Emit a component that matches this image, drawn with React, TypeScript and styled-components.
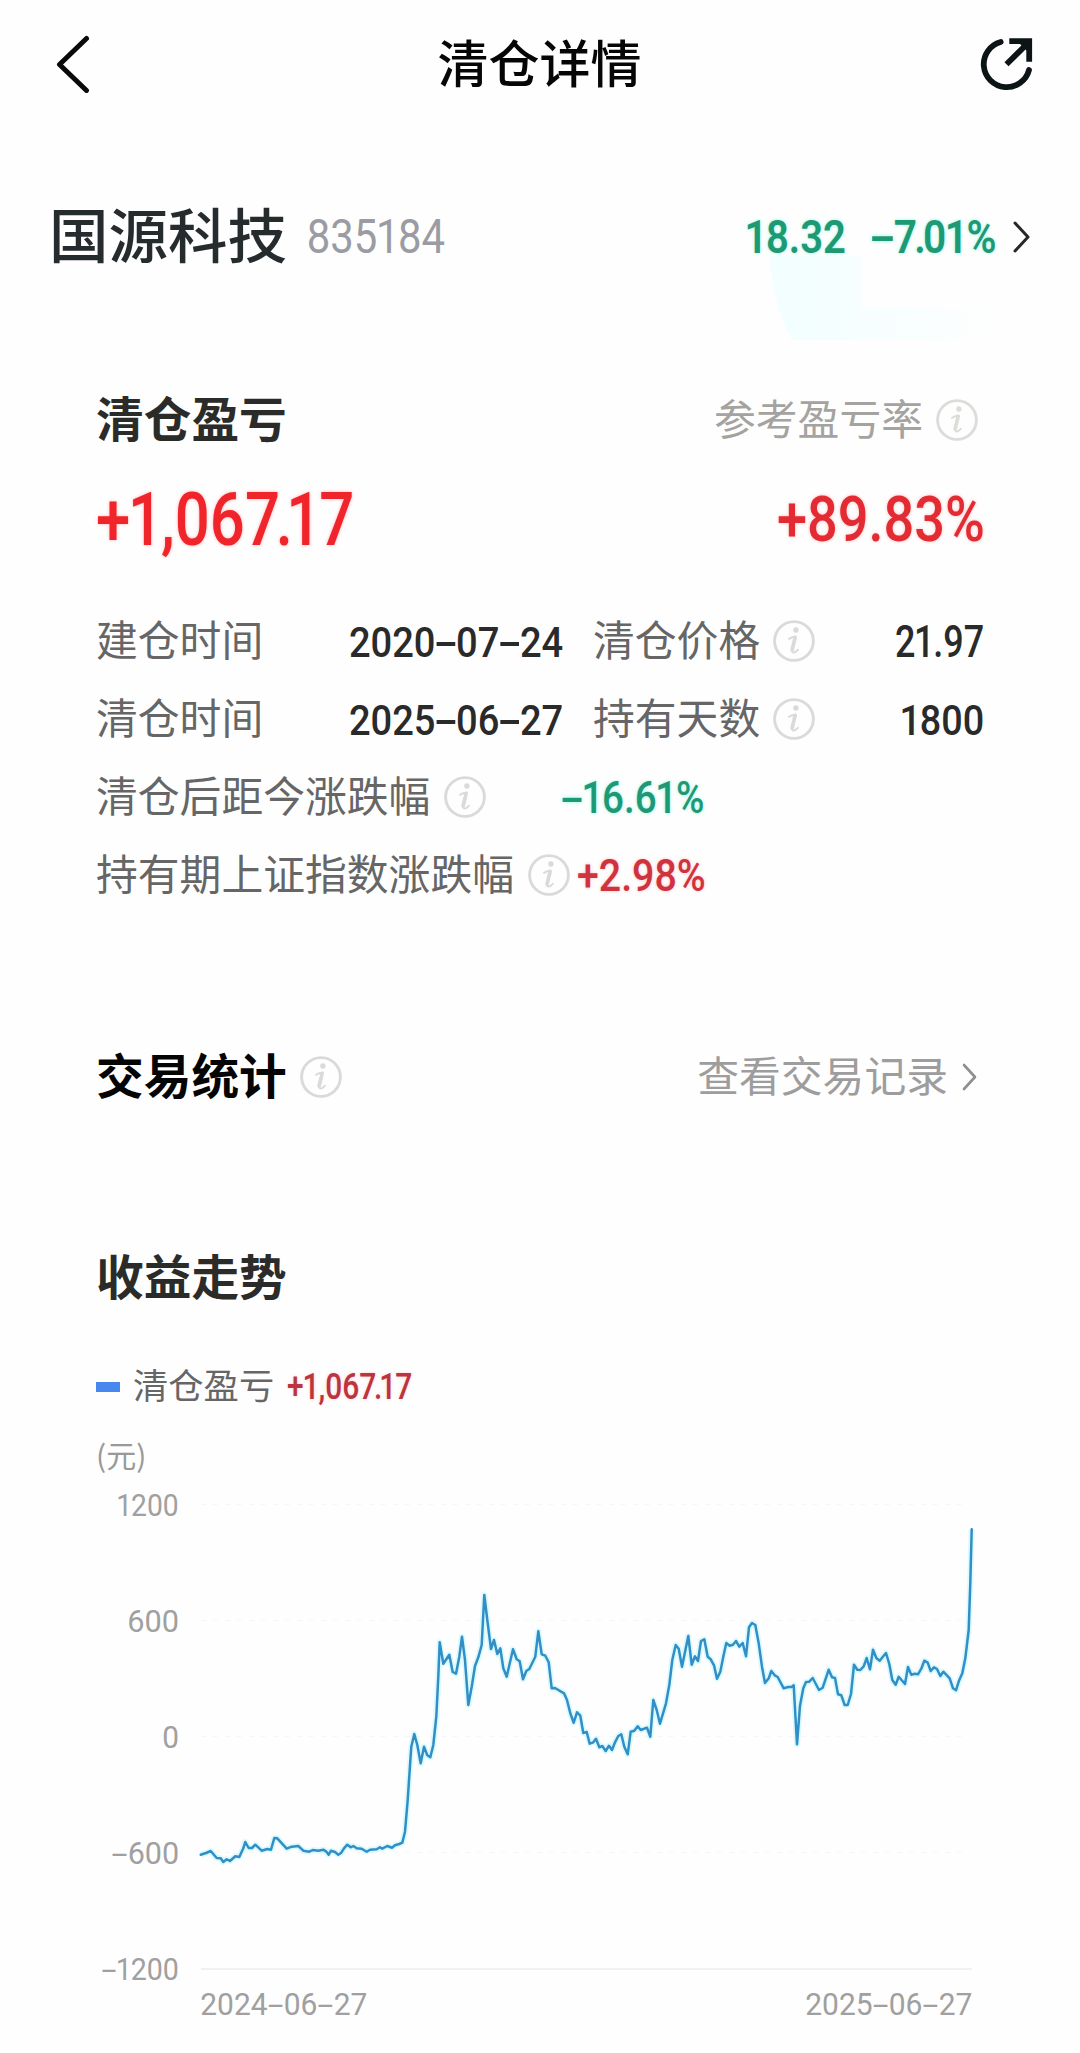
import React, { useLayoutEffect, useRef, useState } from 'react';
import styled, { createGlobalStyle } from 'styled-components';

const GlobalStyle = createGlobalStyle`
  * { box-sizing: border-box; }
  body { margin: 0; background: #fefefe; }
`;

const cjk = '"Noto Sans CJK SC", "Noto Sans", sans-serif';
const latin = 'Roboto, "Noto Sans CJK SC", sans-serif';

const Page = styled.main`
  width: 1080px;
  height: 2053px;
  overflow: hidden;
  background: #fefefe;
  font-family: ${cjk};
  color: #2b2b2b;
`;

const Header = styled.header`
  display: grid;
  grid-template-columns: 1fr auto 1fr;
  align-items: center;
  height: 128px;
  padding: 0 42px 0 54px;
`;

const IconButton = styled.button<{ $align: string }>`
  display: flex;
  justify-content: ${(p) => p.$align};
  padding: 0;
  border: 0;
  background: none;
`;

const Title = styled.h1`
  margin: 0 13px 6px 0;
  font-size: 51px;
  line-height: 60px;
  font-weight: 500;
  color: #060606;
`;

const Quote = styled.section`
  position: relative;
  display: flex;
  align-items: center;
  height: 80px;
  margin-top: 68px;
  padding: 0 50px 0 49px;
`;

const Wash = styled.svg`
  position: absolute;
  left: 768px;
  top: 56px;
`;

const StockName = styled.h2`
  margin: 0 21px 9px 0;
  font-size: 59.5px;
  line-height: 70px;
  font-weight: 500;
  color: #262b2e;
`;

const Price = styled.div`
  display: flex;
  align-items: center;
  gap: 28px;
  margin-left: auto;
  position: relative;
`;

const ChevronSlot = styled.span`
  display: flex;
  margin: 2px 0 0 -10px;
`;

const Section = styled.section<{ $top: number }>`
  margin-top: ${(p) => p.$top}px;
  padding: 0 97px 0 96px;
`;

const Line = styled.div<{ $height: number; $top?: number }>`
  display: flex;
  align-items: center;
  justify-content: space-between;
  height: ${(p) => p.$height}px;
  margin-top: ${(p) => p.$top ?? 0}px;
`;

const Group = styled.div<{ $gap: number; $end?: number }>`
  display: flex;
  align-items: center;
  gap: ${(p) => p.$gap}px;
  padding-right: ${(p) => p.$end ?? 0}px;
`;

const Heading = styled.h3<{ $color?: string }>`
  margin: 0 0 7px;
  font-size: 47.7px;
  line-height: 56px;
  font-weight: 700;
  color: ${(p) => p.$color ?? '#2b2c29'};
`;

const Label = styled.span<{ $color?: string; $size?: number }>`
  margin-bottom: 5px;
  font-size: ${(p) => p.$size ?? 41.8}px;
  line-height: 1.2;
  font-weight: 400;
  white-space: nowrap;
  color: ${(p) => p.$color ?? '#666'};
`;

const DetailRow = styled.div<{ $columns: string }>`
  display: grid;
  grid-template-columns: ${(p) => p.$columns};
  align-items: center;
  height: 78px;
`;

const LegendMark = styled.span`
  width: 24px;
  height: 10px;
  background: #4787ee;
`;

const Chart = styled.div`
  display: grid;
  grid-template-columns: 82px 770px;
  column-gap: 23px;
  margin-top: 9px;
`;

const Axis = styled.div`
  display: flex;
  flex-direction: column;
  align-items: flex-end;
  justify-content: space-between;
  height: 504px;
`;

const Dates = styled.div`
  grid-column: 2;
  display: flex;
  justify-content: space-between;
  align-items: center;
  height: 30px;
`;

const NumberBox = styled.span<{ $width: number }>`
  display: block;
  flex: none;
  width: ${(p) => p.$width}px;
`;

const NumberText = styled.span<{ $size: number; $color: string; $weight: number; $glow?: string }>`
  display: inline-block;
  font-family: ${latin};
  font-size: ${(p) => p.$size}px;
  line-height: 40px;
  font-weight: ${(p) => p.$weight};
  white-space: nowrap;
  transform-origin: 0 50%;
  color: ${(p) => p.$color};
  text-shadow: ${(p) => (p.$glow ? `0 0 4px ${p.$glow}` : 'none')};
`;

const Dash = styled.span`
  display: inline-block;
  width: 0.54em;
  text-align: center;
  transform: scaleX(1.9);
`;

const NarrowOne = styled.span`
  margin: 0 -0.035em;
`;

const TightPair = styled.span`
  letter-spacing: -0.07em;
`;

interface FigureProps {
  text: string;
  width: number;
  size: number;
  color?: string;
  weight?: number;
  glow?: string;
}

function renderPart(part: string, key: number) {
  if (part === '-') return <Dash key={key}>-</Dash>;
  if (part === '1') return <NarrowOne key={key}>1</NarrowOne>;
  if (part === '7.') return <TightPair key={key}>7.</TightPair>;
  return part;
}

// Condenses a figure horizontally so that it fills its column width.
function Figure({ text, width, size, color = '#2a2a2a', weight = 500, glow }: FigureProps) {
  const ref = useRef<HTMLSpanElement>(null);
  const [scale, setScale] = useState(1);
  const left = text[0] === '+' ? 0 : size * 0.025;
  const right = size * 0.03;
  const drop = Math.max(0, (size - 36) * 0.11);
  useLayoutEffect(() => {
    if (ref.current) setScale((width + left + right) / ref.current.offsetWidth);
  }, [text, width, left, right]);
  return (
    <NumberBox $width={width}>
      <NumberText
        ref={ref}
        $size={size}
        $color={color}
        $weight={weight}
        $glow={glow}
        style={{ transform: `translate(${-left}px, ${drop}px) scaleX(${scale})` }}
      >
        {text.split(/(-|1|7\.)/).map(renderPart)}
      </NumberText>
    </NumberBox>
  );
}

function InfoIcon({ color = '#dadada' }: { color?: string }) {
  return (
    <svg width="42" height="42" viewBox="-21 -21 42 42" fill="none" stroke={color} strokeLinecap="round">
      <circle r="19.4" strokeWidth="2.9" />
      <circle cx="1.9" cy="-11" r="2.7" fill={color} stroke="none" />
      <path d="M-5 -2.2C-2.8 -3.6 -.6 -4.2 1.2 -4.2" strokeWidth="2" />
      <path d="M1.2 -3.6L-1.9 9" strokeWidth="3.7" />
      <path d="M-2 9C-2.2 12.6 1 12 3.8 8.8" strokeWidth="2" />
    </svg>
  );
}

function Chevron({ size, color, stroke }: { size: number; color: string; stroke: number }) {
  return (
    <svg width={size / 2 + 3} height={size + 4} fill="none" stroke={color} strokeWidth={stroke} strokeLinecap="round" strokeLinejoin="round">
      <path d={`M2 2L${size / 2 + 1} ${size / 2 + 2}L2 ${size + 2}`} />
    </svg>
  );
}

const curve = `200.7,1854.7 206,1853 210.7,1851 216.7,1858 220.7,1858.3 223.3,1862 226.7,1859.3 230,1861 235.3,1856.3 239.3,1857
243.3,1848.3 245.3,1842 248.7,1848 252,1848 255.3,1844.7 261.7,1850.7 267.3,1849 271,1849.7 274.3,1838 277.3,1838.3
286.7,1848.7 291.7,1846.7 298.3,1846 303.3,1850.7 309.3,1851.7 312.7,1850 318.3,1850.7 323.3,1849.7 326,1851.3 328.7,1854.7
331,1850.7 335,1852 338.3,1854.7 341.3,1852.7 344,1848.3 347.3,1844.7 350.7,1847.3 353.3,1846 356.7,1848.3 361.7,1848.7
366.7,1851.7 370,1849.7 376.7,1849.3 380,1847.3 382.3,1848.7 387.3,1846 392,1847.7 395,1845.3 399.3,1844 402.3,1842.7
405,1831.7 407.7,1800 409.7,1770 411.3,1746.7 414.3,1734 417.3,1745 420.7,1763.3 424,1746.7 427.3,1755.3 430.3,1757.3
433.3,1745 436.3,1716.7 438.3,1676.7 439.7,1642.3 443.3,1663.7 449.3,1654.7 452.7,1672 456,1673.7 459.3,1656.7 462,1636.7
465,1660 468.3,1705 471.7,1686.7 475,1666 478.3,1657.3 481.7,1645 484.3,1595 487.3,1620 491,1649 494,1640
497.3,1654 500.3,1648.3 503.3,1668.3 506.7,1676.7 513,1649.3 516.7,1659.3 519.7,1661.3 523,1679.3 526.3,1671 529.3,1669
535.3,1656.7 538.3,1631.3 541.7,1654.3 545.3,1655.7 548.7,1662.3 551.7,1688.3 555,1688 564,1693.3 567,1700 570.3,1713.3
573.7,1722.7 577,1712.3 580.3,1715.7 583.3,1733 586.7,1732 589.7,1743.7 593.3,1742.3 596,1738.7 599.3,1747.3 602.3,1746
605.7,1751 609,1745.7 612,1750 615,1742.3 618.3,1736 621.3,1734.3 624.3,1746.7 627.7,1754.3 630.7,1731.7 634.3,1730.7
637.7,1726.3 640.7,1730 647,1727.7 650.3,1736.7 653.3,1700 656.7,1710 660,1723.7 666,1703.3 669.3,1685 672.3,1660
675.7,1645 678.7,1648.7 682,1666.7 688.3,1636 691.7,1664.7 695,1656.3 698,1661 701,1641 704.3,1639.3 707.7,1656.7
710.7,1659.3 714,1665.3 717,1678.7 720.3,1671.7 723.3,1656.7 726.3,1643 729.7,1645.7 733,1644.7 736,1641 739.3,1646.7
742.7,1643 746,1656.3 749,1627.3 752,1623 755.3,1625 758.7,1643.3 762,1666.7 765,1683 768.7,1678.3 771.3,1671
774.7,1675.3 777.7,1677 783.7,1688.3 788.3,1687 791.7,1687 793.7,1685.3 797,1744.3 800,1705.7 803.3,1688.3 806,1682
809.3,1681.7 812.7,1678 819,1690 822.7,1687.7 825.3,1680 828.7,1669.7 832,1677.3 835,1678 838,1694.3 841.3,1695.3
844.7,1705 847.7,1705 851,1694 854,1664.7 857.3,1669.7 860.3,1670 863.7,1666.3 866.7,1658 870,1669.3 873,1649.7
876.3,1658 879.7,1660.7 882.7,1657 886,1653 889.3,1664 892.3,1680 895.7,1684.7 898.7,1676.7 905,1684 908,1667
911.3,1674.7 914.7,1673.7 918,1674.3 921.3,1668.7 924.3,1660.7 927.7,1662.7 930.7,1671 934,1667.3 937,1669 940.3,1676
943.3,1671.7 949.7,1678.3 953,1688.3 956,1690.3 959,1680.7 962.3,1673.3 965.3,1658.3 968.7,1630 970.3,1583.3 971.7,1529.3`;

const GREEN = '#1d9a74';
const grid = [1504.5, 1620.5, 1736.5, 1852.5];
const ticks = [
  { text: '1200', width: 60 },
  { text: '600', width: 50 },
  { text: '0', width: 15 },
  { text: '-600', width: 66 },
  { text: '-1200', width: 76 },
];

export default function App() {
  return (
    <Page>
      <GlobalStyle />
      <Header>
        <IconButton $align="flex-start" aria-label="back">
          <svg width="38" height="58" fill="none" stroke="#0a0a0a" strokeWidth="5" strokeLinecap="round" strokeLinejoin="round">
            <path d="M32.5 3.5L5.5 29.5L32.5 55.5" />
          </svg>
        </IconButton>
        <Title>清仓详情</Title>
        <IconButton $align="flex-end" aria-label="share">
          <svg width="60" height="56" fill="none" stroke="#0d1416" strokeWidth="5.8">
            <path d="M22.7 6A23 23 0 1 0 51 34" strokeLinecap="round" />
            <path d="M31.3 5.2H51.2V25.7M28.5 28.2L50 7" />
            <path d="M41 7H51V17Z" fill="#0d1416" stroke="none" />
          </svg>
        </IconButton>
      </Header>

      <Quote>
        <Wash width="240" height="90">
          <defs>
            <linearGradient id="wash" x1="0" x2="1">
              <stop offset="0" stopColor="#f2feff" />
              <stop offset="0.5" stopColor="#f7feff" />
              <stop offset="1" stopColor="#fefefe" />
            </linearGradient>
          </defs>
          <path d="M2 4H94V56H220V88H24Q4 50 2 4Z" fill="url(#wash)" />
        </Wash>
        <StockName>国源科技</StockName>
        <Figure text="835184" width={136} size={48} color="#9b9ca3" weight={400} />
        <Price>
          <Figure text="18.32" width={98} size={47} color={GREEN} weight={600} glow="#9ff5e8" />
          <Figure text="-7.01%" width={122} size={47} color={GREEN} weight={600} glow="#9ff5e8" />
          <ChevronSlot>
            <Chevron size={28} color="#25272a" stroke={3} />
          </ChevronSlot>
        </Price>
      </Quote>

      <Section $top={104}>
        <Line $height={80}>
          <Heading>清仓盈亏</Heading>
          <Group $gap={13} $end={5}>
            <Label $color="#a4a3a0">参考盈亏率</Label>
            <InfoIcon color="#dddcd9" />
          </Group>
        </Line>
        <Line $height={80} $top={20}>
          <Figure text="+1,067.17" width={256} size={75} color="#f0252b" glow="#ffb3b8" />
          <Figure text="+89.83%" width={206} size={63} color="#e32b33" glow="#ffb9bd" />
        </Line>
      </Section>

      <Section $top={42}>
        <DetailRow $columns="254px 243px 1fr auto">
          <Label>建仓时间</Label>
          <Figure text="2020-07-24" width={212} size={43} />
          <Group $gap={13}>
            <Label>清仓价格</Label>
            <InfoIcon />
          </Group>
          <Figure text="21.97" width={87} size={45} />
        </DetailRow>
        <DetailRow $columns="254px 243px 1fr auto">
          <Label>清仓时间</Label>
          <Figure text="2025-06-27" width={212} size={43} />
          <Group $gap={13}>
            <Label>持有天数</Label>
            <InfoIcon />
          </Group>
          <Figure text="1800" width={81} size={43} />
        </DetailRow>
        <DetailRow $columns="467px 1fr">
          <Group $gap={14}>
            <Label>清仓后距今涨跌幅</Label>
            <InfoIcon />
          </Group>
          <Figure text="-16.61%" width={140} size={45} color={GREEN} glow="#9ff5e8" />
        </DetailRow>
        <DetailRow $columns="481px 1fr">
          <Group $gap={14}>
            <Label>持有期上证指数涨跌幅</Label>
            <InfoIcon />
          </Group>
          <Figure text="+2.98%" width={127} size={45} color="#cf333d" glow="#ffc4c8" />
        </DetailRow>
      </Section>

      <Section $top={123}>
        <Line $height={80}>
          <Group $gap={13}>
            <Heading $color="#050505">交易统计</Heading>
            <InfoIcon />
          </Group>
          <Group $gap={14} $end={6}>
            <Label $color="#9d9d9d">查看交易记录</Label>
            <Chevron size={24} color="#8f8f8f" stroke={2.6} />
          </Group>
        </Line>
      </Section>

      <Section $top={121}>
        <Line $height={80}>
          <Heading>收益走势</Heading>
        </Line>
        <Line $height={40} $top={49}>
          <Group $gap={13}>
            <LegendMark />
            <Label $size={35.3}>清仓盈亏</Label>
            <Figure text="+1,067.17" width={124} size={37} color="#bb343e" glow="#ffd2d4" />
          </Group>
        </Line>
        <Line $height={40} $top={29}>
          <Label $size={30} $color="#999">(元)</Label>
        </Line>
        <Chart>
          <Axis>
            {ticks.map((t) => (
              <Figure key={t.text} text={t.text} width={t.width} size={32} color="#a0a0a0" weight={400} />
            ))}
          </Axis>
          <svg width="770" height="504" viewBox="201 1485 770 504" fill="none" overflow="visible">
            {grid.map((y) => (
              <path key={y} d={`M201 ${y}H971`} stroke="#f7f7f7" strokeDasharray="5 7" />
            ))}
            <path d="M201 1969H972" stroke="#f1f1f1" strokeWidth="2" />
            <polyline points={curve} stroke="#bdf6ff" strokeOpacity="0.55" strokeWidth="6" strokeLinejoin="round" />
            <polyline points={curve} stroke="#318fc6" strokeWidth="2.5" strokeLinejoin="round" strokeLinecap="round" />
          </svg>
          <Dates>
            <Figure text="2024-06-27" width={165} size={32} color="#a0a0a0" weight={400} />
            <Figure text="2025-06-27" width={165} size={32} color="#a0a0a0" weight={400} />
          </Dates>
        </Chart>
      </Section>
    </Page>
  );
}
